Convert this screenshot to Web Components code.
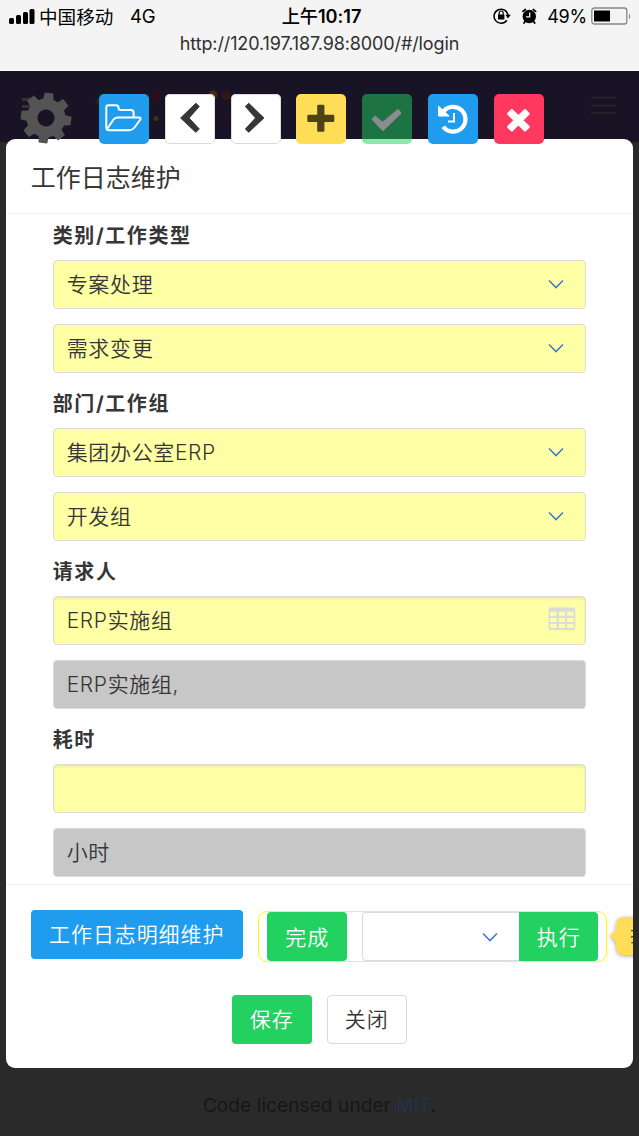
<!DOCTYPE html>
<html lang="zh-CN">
<head>
<meta charset="utf-8">
<title>工作日志维护</title>
<style>
html,body{margin:0;height:100%;overflow:hidden;background:#2a2a2a}
body{font-family:Inter,"Noto Sans CJK SC",sans-serif;color:#363636}
</style>
</head>
<body>
<work-app></work-app>
<script>
const define=(name,html)=>customElements.define(name,class extends HTMLElement{
  constructor(){super();const t=document.createElement('template');t.innerHTML=html;this.attachShadow({mode:'open'}).append(t.content.cloneNode(true));}
});

define('status-bar',`<style>
:host{display:block;height:70px;background:#f4f4f4;color:#000;border-bottom:1px solid #fafafa;box-sizing:content-box}
.row{display:grid;grid-template-columns:1fr auto 1fr;align-items:center;height:32px;padding:0 7px 0 9px;font-size:18px}
.l,.r{display:flex;align-items:center}
.l span{font-size:18.6px;margin-left:4px;position:relative;top:-1px}.l b{font-weight:400;margin-left:16.500px;font-size:18.500px}
.r{justify-content:flex-end}
.t{font-weight:600;font-size:18.200px;position:relative;top:-1px;left:1px;letter-spacing:-.050px}
.t span{font-weight:500}
.u{text-align:center;font-size:18px;line-height:23px;letter-spacing:-.12px;color:#303030}
svg{display:block;flex:none}.pc{margin:0 4px 0 9px;font-size:18px;letter-spacing:-.2px}
</style>
<div class="row"><div class="l"><svg width="26" height="17" viewBox="0 0 26 17"><rect x="0" y="10" width="5" height="6" rx="1.5"/><rect x="7" y="7" width="5" height="9" rx="1.5"/><rect x="14" y="4" width="5" height="12" rx="1.5"/><rect x="20.500" y="1" width="5" height="15" rx="1.5"/></svg><span>中国移动</span><b>4G</b></div>
<div class="t"><span>上午</span>10:17</div>
<div class="r"><svg width="18" height="18" viewBox="0 0 18 18"><path d="M13.8 13.2A7 7 0 1 1 15 8.4" fill="none" stroke="#000" stroke-width="1.5"/><path d="M12.4 7.8h5.4L15 11.5z"/><rect x="5" y="7.5" width="6.4" height="5" rx=".6"/><path d="M6.2 8V6a2 2 0 0 1 4 0v2" fill="none" stroke="#000" stroke-width="1.2"/></svg>
<svg style="margin-left:10px" width="17" height="18" viewBox="0 0 17 18"><circle cx="8.3" cy="9.5" r="6.7"/><path d="M2 4.400 4.300 2.500M12.300 2.500l2.300 1.900M4 14.5l-1 1.500M12.700 14.5l1 1.500" stroke="#000" stroke-width="1.800" stroke-linecap="round"/><path d="M8.7 5.5v4.3H5" fill="none" stroke="#f4f4f4" stroke-width="1.3"/></svg>
<span class="pc">49%</span>
<svg width="41" height="19" viewBox="0 0 41 19"><rect x=".8" y="1" width="35" height="16" rx="2.6" fill="none" stroke="#888" stroke-width="1.3"/><rect x="3" y="3.500" width="16" height="11" /><path d="M38 6.5q2.5 3 0 6z" fill="#888"/></svg></div></div>
<div class="u">http://120.197.187.98:8000/#/login</div>`);

define('page-backdrop',`<style>
:host{display:flex;flex-direction:column;background:#2a2a2a;height:1065px;box-sizing:border-box}
.nav{height:71px;background:#191425}
.nav svg{display:block}
.foot{margin-top:auto;height:62px;text-align:center;font-size:19px;line-height:63px;letter-spacing:.1px;color:#171717}
.foot span{color:#213350}
</style><div class="nav"><svg width="639" height="71" viewBox="0 71 639 71"><g fill="#320b18"><circle cx="142" cy="96" r="4.5"/><circle cx="156" cy="96" r="4.5"/></g><circle cx="156" cy="118.500" r="2.5" fill="#3c321b"/><circle cx="213" cy="95" r="4.500" fill="#4a2814"/><circle cx="226" cy="95.500" r="4.500" fill="#2e1816"/><circle cx="226" cy="118" r="2.500" fill="#211320"/><circle cx="98" cy="101" r="3" fill="#241e1c"/><path d="M22 99.500h9M22 106.500h9" stroke="#35313a" stroke-width="3"/><path d="M591 97.500h25M591 105.500h25M591 113h25" stroke="#2a262b" stroke-width="1.500"/></svg></div>
<div class="foot">Code licensed under <span>MIT</span>.</div>`);

define('tool-button',`<style>
:host{display:block;width:50px;height:50px;border-radius:5px;box-sizing:border-box;background:var(--bg,#fff);color:var(--fg,#363636);overflow:hidden}
:host([plain]){box-shadow:inset 0 0 0 1px #dbdbdb}
:host([disabled]){opacity:.5}
</style><slot></slot>`);

define('gear-icon',`<style>:host{display:block}svg{display:block}</style><svg width="52" height="52" viewBox="-26 -26 52 52"><defs><path id="t" d="M-5.500 -16 -4.300 -25.200H4.300L5.500 -16z"/></defs><g fill="#545454" transform="rotate(7)"><path fill-rule="evenodd" d="M0-19.500A19.500 19.500 0 1 1 0 19.500 19.500 19.500 0 1 1 0-19.500zM0-8.500A8.500 8.500 0 1 0 0 8.500 8.500 8.500 0 1 0 0-8.500z"/><use href="#t"/><use href="#t" transform="rotate(45)"/><use href="#t" transform="rotate(90)"/><use href="#t" transform="rotate(135)"/><use href="#t" transform="rotate(180)"/><use href="#t" transform="rotate(225)"/><use href="#t" transform="rotate(270)"/><use href="#t" transform="rotate(315)"/></g></svg>`);

define('tool-strip',`<style>
:host{display:flex;align-items:flex-start;padding:23px 0 0 20px}
.b{display:flex;gap:15.8px;margin-left:27px}
tool-button svg{display:block;width:50px;height:50px}
</style><gear-icon style="margin-top:-2px"></gear-icon><div class="b">
<tool-button style="--bg:#209cee"><svg viewBox="0 0 50 50" fill="none" stroke="#fff" stroke-width="2" stroke-linejoin="round"><path d="M8 35.500Q7.300 34.800 7.300 33V13.500Q7.300 11.300 9.500 11.300H17Q19.500 11.300 19.500 13.700 19.500 16 21.700 16H32Q34.600 16 34.600 18.600V23.400M8.500 34.500 14.500 25.500Q16 23.400 18.500 23.400H39.500Q42.700 23.400 41 26L35.500 33.500Q33.400 36.200 30.500 36.200H10Q6.900 36.200 8.500 34.500z"/></svg></tool-button>
<tool-button plain><svg viewBox="0 0 50 50" fill="#363636" stroke="#363636" stroke-linejoin="round"><path d="M15.600 24 30.800 9.300 34.300 12.500 24 24 34.300 35 30.800 38.300z"/></svg></tool-button>
<tool-button plain><svg viewBox="0 0 50 50" fill="#363636" stroke="#363636" stroke-linejoin="round"><path d="M32.900 24 17.700 9.300 14.400 12.500 24.500 24 14.400 35 17.700 38.300z"/></svg></tool-button>
<tool-button style="--bg:#ffdd57"><svg viewBox="0 0 50 50" fill="#4d4218"><rect x="11.300" y="20.700" width="27" height="7.200" rx="1.200"/><rect x="21.200" y="10.800" width="7.200" height="27" rx="1.200"/></svg></tool-button>
<tool-button disabled style="--bg:#23d160"><svg viewBox="0 0 50 50" fill="#fff" stroke="#fff" stroke-width="1.600" stroke-linejoin="round"><path d="M10.500 25.300 13.300 22.500 20.500 28.800 36 15.800 38.700 19 21 36.300z"/></svg></tool-button>
<tool-button style="--bg:#209cee"><svg viewBox="0 0 50 50" fill="none" stroke="#fff"><path d="M15.500 17.300A12.400 12.400 0 1 1 15.200 32.800" stroke-width="4.300"/><path d="M10.500 12.200V22h10.700z" fill="#fff" stroke-linejoin="round"/><path d="M26 19v8.600h-6" stroke-width="2"/></svg></tool-button>
<tool-button style="--bg:#ff3860"><svg viewBox="0 0 50 50" stroke="#fff" stroke-width="3" stroke-linejoin="round" fill="#fff"><path transform="translate(24.400 26.300)" d="M-6.600 -9.700 0 -3.200 6.600 -9.700 9.700 -6.600 3.200 0 9.700 6.600 6.600 9.700 0 3.200 -6.600 9.700 -9.700 6.600 -3.200 0 -9.700 -6.600z"/></svg></tool-button></div>`);

define('field-label',`<style>:host{display:flex;align-items:center;box-sizing:border-box;height:46px;padding-bottom:3px;font-size:20px;font-weight:700;letter-spacing:1.600px;line-height:24px}</style><slot></slot>`);

define('form-field',`<style>
:host{display:flex;align-items:center;justify-content:space-between;box-sizing:border-box;width:533.500px;height:48.500px;border:1.500px solid #dbdbdb;border-radius:4px;background:#ffffa5;padding:0 20px 3px 13px;font-size:21px;font-weight:350;letter-spacing:.650px}
:host([readonly]){background:#c7c7c7}
:host([inset]){box-shadow:inset 0 2px 3px rgba(10,10,10,.08)}
:host([grid]){padding-right:9px}
::slotted(down-arrow){margin-top:3px}
</style><span><slot></slot></span><slot name="icon"></slot>`);

define('down-arrow',`<style>:host{display:block}svg{display:block}</style><svg width="18" height="12" viewBox="0 0 18 12"><path d="M2 2.500 9 9.500 16 2.500" fill="none" stroke="#3f7bd0" stroke-width="1.600"/></svg>`);
define('table-icon',`<style>:host{display:block}svg{display:block}</style><svg width="28" height="24" viewBox="0 0 28 24"><path fill="#dbdbdb" fill-rule="evenodd" d="M2.500 .500h22.500q2.300 0 2.300 2.300v18q0 2.300-2.300 2.300H2.500Q.500 23.100 .500 20.800v-18Q.500 .500 2.500 .500zM2.200 4.700v4h6.500v-4zM10.900 4.700v4h6v-4zM19.100 4.700v4h6.500v-4zM2.200 10.900v4h6.500v-4zM10.900 10.900v4h6v-4zM19.100 10.900v4h6.500v-4zM2.200 17.100v4h6.500v-4zM10.900 17.100v4h6v-4zM19.100 17.100v4h6.500v-4z"/></svg>`);

define('push-button',`<style>
:host{display:flex;flex:none;align-items:center;justify-content:center;box-sizing:border-box;width:var(--w,80px);height:48.500px;border-radius:4px;background:var(--bg,#23d160);color:#fff;font-size:21px;font-weight:350;letter-spacing:.900px;padding-bottom:2px}
:host([plain]){background:#fff;color:#363636;border:1.500px solid #dbdbdb}
</style><slot></slot>`);

define('action-group',`<style>
:host{display:flex;flex:none;box-sizing:border-box;width:349px;height:51px;border:1px solid #ff0;border-radius:9px;padding:0 0 0 8px}
.s{display:flex;flex:none;align-items:center;justify-content:flex-end;box-sizing:border-box;width:157px;height:49px;margin-left:15px;border:1px solid #dbdbdb;border-right:0;border-radius:4px 0 0 4px;padding-right:20px}
push-button{height:49px;padding-bottom:1px}
.e{border-radius:0 4px 4px 0}
</style><push-button>完成</push-button><div class="s"><down-arrow></down-arrow></div><push-button class="e" style="--w:79px">执行</push-button>`);

define('side-tip',`<style>
:host{display:flex;align-items:center;flex:none;height:52px;filter:drop-shadow(0 1px 2px rgba(0,0,0,.35))}
i{border:7px solid transparent;border-left:0;border-right-color:#ffdd57;margin-right:-1px}
span{display:block;background:#ffdd57;border-radius:8px;height:38px;line-height:38px;padding:0 14px;font-size:18px;white-space:nowrap;color:#4d4218}
</style><i></i><span>提交</span>`);

define('modal-card',`<style>
:host{display:flex;flex-direction:column;box-sizing:border-box;width:626.500px;height:929px;border-radius:9px;background:#fff;overflow:hidden}
header{box-sizing:border-box;height:75px;border-bottom:1.500px solid #efefef;padding:0 0 1px 24.500px;display:flex;align-items:center;font-size:25px;font-weight:400}
main{height:670px;box-sizing:border-box;padding-left:46.500px}
section{height:158px;margin-bottom:10px}
section form-field + form-field{margin-top:15.700px}
footer{box-sizing:border-box;border-top:1.500px solid #efefef;flex:1;padding-top:25px}
.a{display:flex;width:680px;padding-left:24.500px}
.c{display:flex;gap:15px;padding-left:225.500px;margin-top:33px}
</style><header>工作日志维护</header><main>
<section><field-label>类别/工作类型</field-label><form-field>专案处理<down-arrow slot="icon"></down-arrow></form-field><form-field>需求变更<down-arrow slot="icon"></down-arrow></form-field></section>
<section><field-label>部门/工作组</field-label><form-field>集团办公室ERP<down-arrow slot="icon"></down-arrow></form-field><form-field>开发组<down-arrow slot="icon"></down-arrow></form-field></section>
<section><field-label>请求人</field-label><form-field inset grid>ERP实施组<table-icon slot="icon"></table-icon></form-field><form-field readonly>ERP实施组,</form-field></section>
<section><field-label>耗时</field-label><form-field inset></form-field><form-field readonly>小时</form-field></section>
</main><footer><div class="a"><push-button style="--w:212px;--bg:#209cee">工作日志明细维护</push-button><action-group style="margin:1px 0 0 15.500px"></action-group><side-tip style="margin-left:3px"></side-tip></div>
<div class="c"><push-button>保存</push-button><push-button plain>关闭</push-button></div></footer>`);

define('work-app',`<style>
:host{display:grid;grid-template-rows:71px 1065px;width:639px;height:1136px;overflow:hidden}
.stage{display:grid}
.stage>*{grid-area:1/1}
modal-card{margin:68px 0 0 6.200px;align-self:start}
tool-strip{align-self:start}
</style><status-bar></status-bar><div class="stage"><page-backdrop></page-backdrop><modal-card></modal-card><tool-strip></tool-strip></div>`);
</script>
</body>
</html>
